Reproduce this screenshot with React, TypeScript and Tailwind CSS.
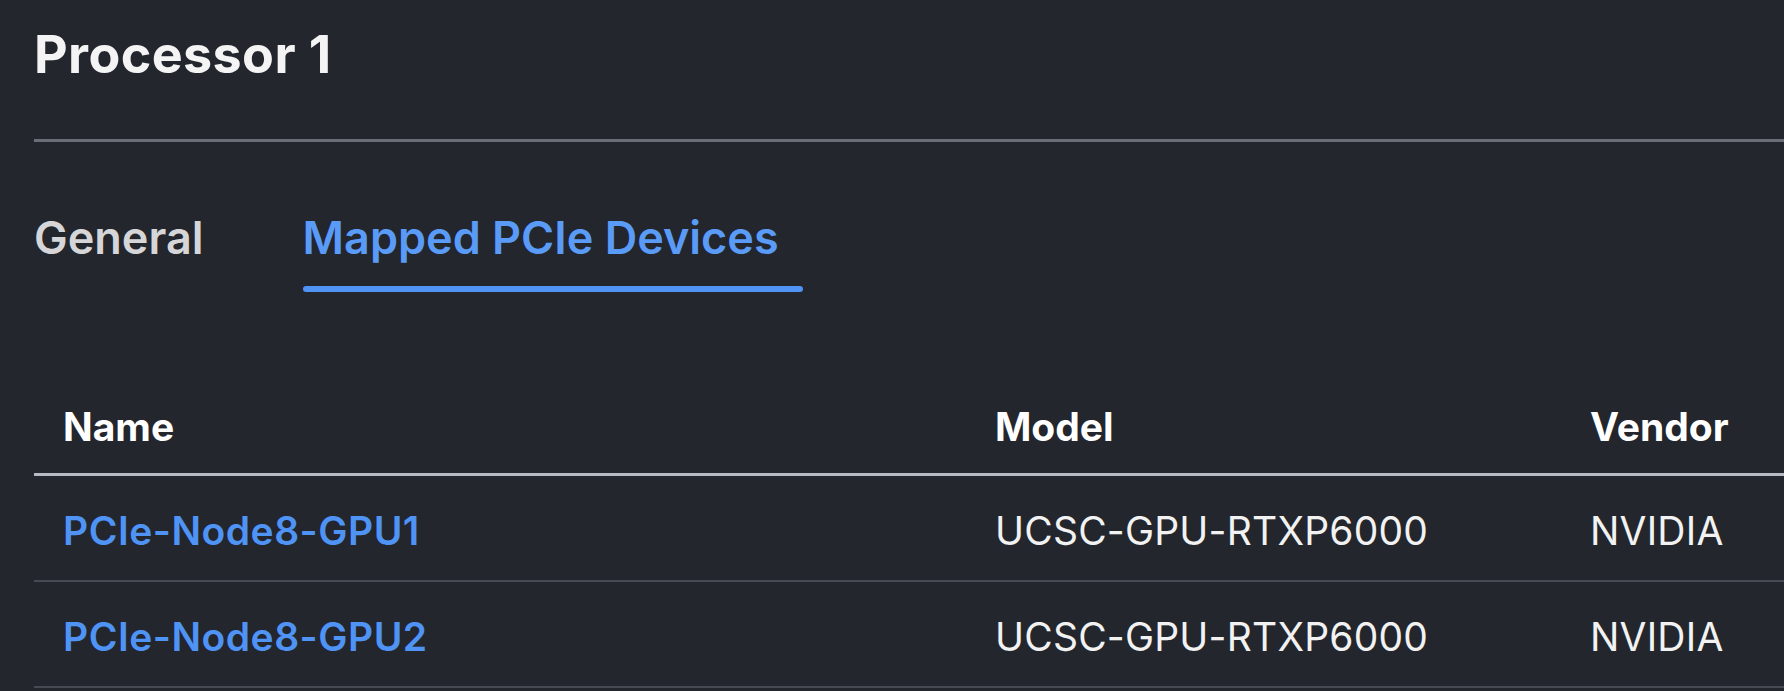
import React from "react";

const rows = [
  { name: "PCIe-Node8-GPU1", model: "UCSC-GPU-RTXP6000", vendor: "NVIDIA" },
  { name: "PCIe-Node8-GPU2", model: "UCSC-GPU-RTXP6000", vendor: "NVIDIA" },
];

export default function App() {
  return (
    <div
      className="min-h-screen w-full overflow-hidden bg-[#23262c] pl-[34px]"
      style={{ fontFamily: "Inter, 'Noto Sans', sans-serif" }}
    >
      <h1 className="pt-[24px] text-[52px] leading-[62px] font-bold tracking-[0.4px] text-[#f4f4f5]">
        Processor 1
      </h1>
      <div className="mt-[53px] h-[3px] w-full bg-[#696d75]" />

      <div className="mt-[69px] flex items-start gap-[76px]">
        <button className="flex flex-col pr-[23px] text-left">
          <span className="text-[45px] leading-[54px] font-semibold text-[#d6d6d8]">General</span>
          <span className="mt-[21px] h-[6px] w-full rounded-full bg-transparent" />
        </button>
        <button className="flex flex-col text-left">
          <span className="pr-[24px] text-[45px] leading-[54px] font-semibold text-[#5a9bf7]">
            Mapped PCIe Devices
          </span>
          <span className="mt-[21px] h-[6px] w-full rounded-full bg-[#4f93f5]" />
        </button>
      </div>

      <div className="mt-[87px] w-full">
        <div className="grid grid-cols-[932px_595px_1fr] border-b-[3px] border-[#b6bac2] pt-[25px] pb-[23px]">
          <div className="pl-[29px] text-[39px] leading-[46px] font-bold text-white">Name</div>
          <div className="pl-[29px] text-[39px] leading-[46px] font-bold text-white">Model</div>
          <div className="pl-[29px] text-[39px] leading-[46px] font-bold text-white">Vendor</div>
        </div>
        {rows.map((r) => (
          <div
            key={r.name}
            className="grid grid-cols-[932px_595px_1fr] border-b-2 border-[#464a52] pt-[32px] pb-[26px]"
          >
            <div className="pl-[29px] text-[39px] leading-[46px] font-semibold tracking-[0.5px] text-[#4f93f5]">
              {r.name}
            </div>
            <div className="pl-[29px] text-[39px] leading-[46px] font-normal tracking-[0.2px] text-[#f2f2f3]">
              {r.model}
            </div>
            <div className="pl-[29px] text-[39px] leading-[46px] font-normal tracking-[0.2px] text-[#f2f2f3]">
              {r.vendor}
            </div>
          </div>
        ))}
      </div>
    </div>
  );
}
